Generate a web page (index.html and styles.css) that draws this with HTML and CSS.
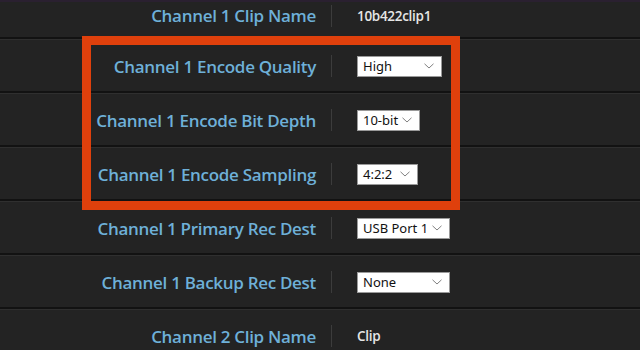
FILE: index.html
```html
<!DOCTYPE html>
<html>
<head>
<meta charset="utf-8">
<link rel="stylesheet" href="styles.css">
</head>
<body>
<div class="page">
  <div class="list">
    <div class="row first">
      <div class="label">Channel 1 Clip Name</div>
      <div class="divider"></div>
      <div class="value">10b422clip1</div>
    </div>
    <div class="row">
      <div class="label">Channel 1 Encode Quality</div>
      <div class="divider"></div>
      <div class="value"><div class="select w85"><span>High</span><svg class="chev" width="10" height="6" viewBox="0 0 10 6"><path d="M0.5 0.8 L5 5 L9.5 0.8" fill="none" stroke="#808080" stroke-width="1"/></svg></div></div>
    </div>
    <div class="row">
      <div class="label">Channel 1 Encode Bit Depth</div>
      <div class="divider"></div>
      <div class="value"><div class="select w63"><span>10-bit</span><svg class="chev" width="10" height="6" viewBox="0 0 10 6"><path d="M0.5 0.8 L5 5 L9.5 0.8" fill="none" stroke="#808080" stroke-width="1"/></svg></div></div>
    </div>
    <div class="row">
      <div class="label">Channel 1 Encode Sampling</div>
      <div class="divider"></div>
      <div class="value"><div class="select w61"><span>4:2:2</span><svg class="chev" width="10" height="6" viewBox="0 0 10 6"><path d="M0.5 0.8 L5 5 L9.5 0.8" fill="none" stroke="#808080" stroke-width="1"/></svg></div></div>
    </div>
    <div class="row">
      <div class="label">Channel 1 Primary Rec Dest</div>
      <div class="divider"></div>
      <div class="value"><div class="select w93"><span>USB Port 1</span><svg class="chev" width="10" height="6" viewBox="0 0 10 6"><path d="M0.5 0.8 L5 5 L9.5 0.8" fill="none" stroke="#808080" stroke-width="1"/></svg></div></div>
    </div>
    <div class="row">
      <div class="label">Channel 1 Backup Rec Dest</div>
      <div class="divider"></div>
      <div class="value"><div class="select w93"><span>None</span><svg class="chev" width="10" height="6" viewBox="0 0 10 6"><path d="M0.5 0.8 L5 5 L9.5 0.8" fill="none" stroke="#808080" stroke-width="1"/></svg></div></div>
    </div>
    <div class="row">
      <div class="label">Channel 2 Clip Name</div>
      <div class="divider"></div>
      <div class="value">Clip</div>
    </div>
  </div>
  <div class="highlight"></div>
</div>
</body>
</html>
```

FILE: styles.css
```css
html, body {
  margin: 0;
  padding: 0;
  background: #232323;
  overflow: hidden;
}

.page {
  position: relative;
  width: 640px;
  height: 350px;
  overflow: hidden;
  background: #232323;
  border-top: 2px solid #2a2030;
  box-sizing: border-box;
}

.list {
  display: flex;
  flex-direction: column;
}

.row {
  height: 54px;
  box-sizing: border-box;
  padding-top: 2px;
  border-bottom: 2px solid #121212;
  box-shadow: 0 1px 0 #2f2f2f;
  display: grid;
  grid-template-columns: 316px 1px 1fr;
  align-items: center;
}

.row.first {
  height: 37px;
  padding-top: 0;
  padding-bottom: 8px;
}

.label {
  text-align: right;
  font-family: "Open Sans", sans-serif;
  font-weight: 600;
  font-size: 17px;
  letter-spacing: -0.3px;
  color: #6eb0d8;
  white-space: nowrap;
}

.divider {
  margin-left: 15px;
  width: 1px;
  height: 22px;
  background: #3c3c3c;
}

.value {
  margin-left: 40px;
  font-family: "Open Sans", sans-serif;
  font-weight: 600;
  font-size: 13.5px;
  letter-spacing: -0.3px;
  color: #e6e6e6;
}

.select {
  height: 21px;
  box-sizing: border-box;
  background: #ffffff;
  border: 1px solid #9a9a9a;
  display: flex;
  align-items: center;
  justify-content: space-between;
  padding: 0 7px 0 5px;
  font-family: "Noto Sans", sans-serif;
  font-weight: 400;
  font-size: 13px;
  letter-spacing: 0;
  color: #111111;
}

.w85 { width: 85px; }
.w63 { width: 63px; }
.w61 { width: 61px; }
.w93 { width: 93px; }

.chev {
  display: block;
}

.highlight {
  position: absolute;
  left: 82px;
  top: 34px;
  width: 378px;
  height: 174px;
  box-sizing: border-box;
  border: 9px solid #df400c;
}
```
